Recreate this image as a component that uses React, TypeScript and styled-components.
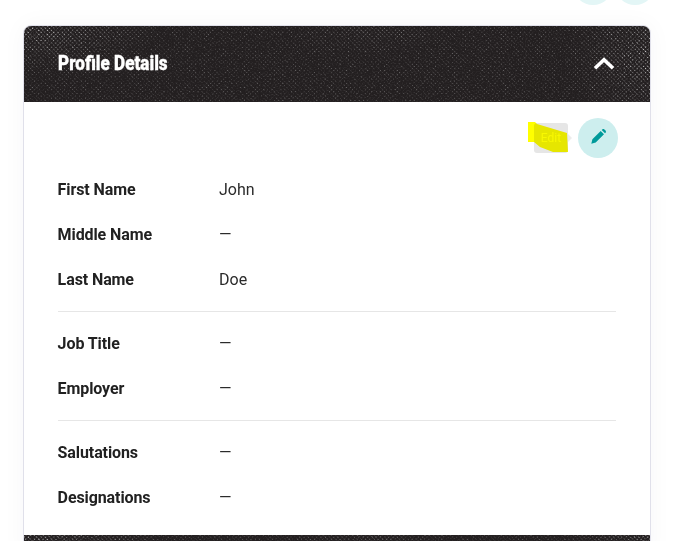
import React, { useId } from "react";
import styled, { createGlobalStyle } from "styled-components";

const Global = createGlobalStyle`
  html, body { margin: 0; padding: 0; background: #fff; overflow: hidden; }
  body { font-family: Roboto, "Liberation Sans", sans-serif; color: #212121; }
`;

const Page = styled.div`
  width: 677px;
  height: 541px;
  overflow: hidden;
  padding: 0 26px 0 23px;
  box-sizing: border-box;
`;

const TopActions = styled.div`
  display: flex;
  justify-content: flex-end;
  gap: 2px;
  height: 25px;
  margin-right: -4px;
`;

const GhostCircle = styled.div`
  width: 40px;
  height: 40px;
  border-radius: 50%;
  background: #e3f6f6;
  margin-top: -35px;
`;

const Card = styled.section`
  border: 1px solid #e0e0ea;
  border-radius: 8px 8px 0 0;
  background: #fff;
  box-shadow: 0 0 24px rgba(40, 40, 70, 0.04);
  overflow: hidden;
`;

const Band = styled.div<{ $height: number }>`
  position: relative;
  height: ${(p) => p.$height}px;
  background: #231f20;
`;

const GrainSvg = styled.svg<{ $faint?: boolean }>`
  position: absolute;
  inset: 0;
  width: 100%;
  height: 100%;
  display: block;
  opacity: ${(p) => (p.$faint ? 0.32 : 0.95)};
  ${(p) =>
    !p.$faint &&
    `
    -webkit-mask-image:
      radial-gradient(ellipse 140px 50px at 0 0, #000 0%, transparent 100%),
      radial-gradient(ellipse 85px 90px at 100% 35%, rgba(0,0,0,.9) 0%, transparent 100%),
      radial-gradient(ellipse 90px 35px at 55% 0, rgba(0,0,0,.35) 0%, transparent 100%);
    mask-image:
      radial-gradient(ellipse 140px 50px at 0 0, #000 0%, transparent 100%),
      radial-gradient(ellipse 85px 90px at 100% 35%, rgba(0,0,0,.9) 0%, transparent 100%),
      radial-gradient(ellipse 90px 35px at 55% 0, rgba(0,0,0,.35) 0%, transparent 100%);
  `}
`;

function Grain({ faint, seed }: { faint?: boolean; seed: number }) {
  const id = useId().replace(/:/g, "");
  return (
    <GrainSvg $faint={faint} aria-hidden="true">
      <defs>
        <pattern id={`d${id}`} width="3" height="3" patternUnits="userSpaceOnUse" patternTransform="rotate(45)">
          <circle cx="1.5" cy="1.5" r="0.8" fill="#fff" />
        </pattern>
        <filter id={`f${id}`} x="0" y="0" width="100%" height="100%">
          <feTurbulence type="fractalNoise" baseFrequency="0.7" numOctaves="2" seed={seed} result="n" />
          <feColorMatrix
            in="n"
            type="matrix"
            values="0 0 0 0 1  0 0 0 0 1  0 0 0 0 1  3 3 0 0 -2.6"
            result="a"
          />
          <feComposite in="SourceGraphic" in2="a" operator="in" />
        </filter>
      </defs>
      <rect width="100%" height="100%" fill={`url(#d${id})`} filter={`url(#f${id})`} />
    </GrainSvg>
  );
}

const HeaderInner = styled.div`
  position: relative;
  z-index: 1;
  height: 100%;
  display: flex;
  align-items: center;
  justify-content: space-between;
  padding: 0 34px;
`;

const CardTitle = styled.h2`
  margin: 0 0 2px;
  font-family: Roboto, sans-serif;
  font-size: 20px;
  font-weight: 900;
  color: #fff;
  line-height: 1;
  -webkit-text-stroke: 0.3px #fff;
  transform: scaleX(0.855);
  transform-origin: left center;
  white-space: nowrap;
`;

const Chevron = styled.svg`
  width: 24px;
  height: 16px;
  display: block;
`;

const Body = styled.div`
  padding: 16px 34px 0 34px;
  height: 433px;
  box-sizing: border-box;
`;

const EditRow = styled.div`
  position: relative;
  display: flex;
  justify-content: flex-end;
  align-items: center;
  gap: 10px;
  height: 40px;
  margin-bottom: 9px;
`;

const Tooltip = styled.div`
  position: relative;
  width: 34px;
  height: 30px;
  border-radius: 3px;
  background: #e6e6e6;
  color: #f8f8f8;
  font-size: 12px;
  display: flex;
  align-items: center;
  justify-content: center;
  &::after {
    content: "";
    position: absolute;
    right: -4px;
    top: 11px;
    border-left: 4px solid #ececec;
    border-top: 4px solid transparent;
    border-bottom: 4px solid transparent;
  }
`;

const Highlight = styled.svg`
  position: absolute;
  right: 46px;
  top: 4px;
  width: 42px;
  height: 32px;
  mix-blend-mode: multiply;
  pointer-events: none;
`;

const EditButton = styled.button`
  width: 40px;
  height: 40px;
  border: 0;
  padding: 0 0 4px;
  border-radius: 50%;
  background: #cdeeee;
  color: #009a9a;
  display: flex;
  align-items: center;
  justify-content: center;
  margin-right: -2px;
`;

const Group = styled.dl<{ $divided?: boolean }>`
  margin: 0;
  ${(p) => p.$divided && "border-bottom: 1px solid #e6e6e6; padding-bottom: 9px; margin-bottom: 9px;"}
`;

const Row = styled.div`
  display: grid;
  grid-template-columns: 161px 1fr;
  align-items: center;
  height: 45px;
`;

const Label = styled.dt`
  font-size: 16px;
  font-weight: 700;
  color: #212121;
  letter-spacing: -0.1px;
  margin-left: -0.4px;
`;

const Value = styled.dd`
  margin: 0;
  font-size: 16px;
  font-weight: 400;
  color: #2b2b2b;
`;

const groups: [string, string][][] = [
  [["First Name", "John"], ["Middle Name", "—"], ["Last Name", "Doe"]],
  [["Job Title", "—"], ["Employer", "—"]],
  [["Salutations", "—"], ["Designations", "—"]],
];

export default function App() {
  return (
    <Page>
      <Global />
      <TopActions>
        <GhostCircle />
        <GhostCircle />
      </TopActions>
      <Card>
        <Band $height={76}>
          <Grain faint seed={3} />
          <Grain seed={8} />
          <HeaderInner>
            <CardTitle>Profile Details</CardTitle>
            <Chevron viewBox="0 0 24 16" aria-hidden="true">
              <path d="M3 12.2 L12 3.7 L21 12.2" fill="none" stroke="#fff" strokeWidth="3.6" />
            </Chevron>
          </HeaderInner>
        </Band>
        <Body>
          <EditRow>
            <Tooltip>Edit</Tooltip>
            <Highlight viewBox="0 0 42 32" aria-hidden="true">
              <polygon points="0,0 7,0 9,2 39,11 40,30 25,30 12,25 6,20 0,20" fill="#ffff00" />
            </Highlight>
            <EditButton aria-label="Edit">
              <svg width="15" height="15" viewBox="0 0 15 15" aria-hidden="true">
                <path
                  fill="currentColor"
                  d="M0.3 14.7 L1.4 10.3 L9.7 2 L13 5.3 L4.7 13.6 Z M10.7 1 L11.3 .45 C11.9 -.1 12.8 -.1 13.4 .45 L14.55 1.6 C15.1 2.2 15.1 3.1 14.55 3.7 L14 4.3 Z"
                />
              </svg>
            </EditButton>
          </EditRow>
          {groups.map((group, i) => (
            <Group key={i} $divided={i < 2}>
              {group.map(([label, value]) => (
                <Row key={label}>
                  <Label>{label}</Label>
                  <Value>{value}</Value>
                </Row>
              ))}
            </Group>
          ))}
        </Body>
        <Band $height={20}>
          <Grain faint seed={5} />
          <Grain seed={11} />
        </Band>
      </Card>
    </Page>
  );
}
